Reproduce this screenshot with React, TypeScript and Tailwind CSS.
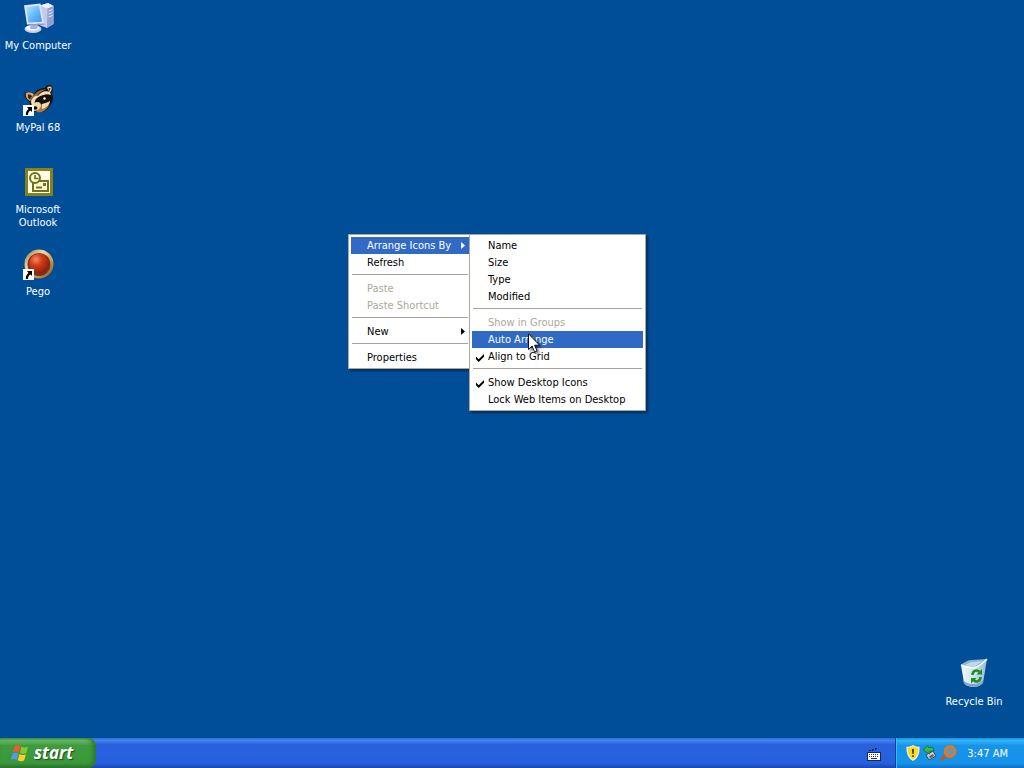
import type { ReactNode } from "react";
import clsx from "clsx";

function MyComputerIcon() {
  return (
    <svg width="32" height="32" viewBox="0 0 32 32" aria-hidden="true">
      <defs>
        <linearGradient id="screen" x1="0" y1="0" x2="1" y2="1">
          <stop offset="0" stopColor="#b5e6ff" />
          <stop offset="0.5" stopColor="#66bdf8" />
          <stop offset="1" stopColor="#3a92ea" />
        </linearGradient>
      </defs>
      <path d="M18 3.5 26 1l5.5 3v18L25 26l-8-3Z" fill="#c3cbea" />
      <path d="M18 3.5 26 1l5.5 3-6 2.5Z" fill="#eef1fc" />
      <path d="M25.5 6.5 31.5 4v18L25 26Z" fill="#94a0cf" />
      <path d="m26.5 9 4-1.5M26.5 12l4-1.5M26.5 15l4-1.5" stroke="#e6eafa" strokeWidth="1" />
      <ellipse cx="11" cy="27" rx="8.5" ry="4" fill="#c9cfeb" />
      <ellipse cx="10.5" cy="26" rx="7" ry="2.8" fill="#f4f5fd" />
      <path d="m9 21 7 2-1 4H8Z" fill="#a7b0d8" />
      <path d="M2 3.2 18.5 1.4 22 21.5 5 22.6Z" fill="#dde4f7" />
      <path d="M4 5 17 3.5l3 16.2-13.5.9Z" fill="url(#screen)" />
      <path d="M22 21.5 5 22.6l1 1 17-.8Z" fill="#8d99c8" />
    </svg>
  );
}

function RaccoonIcon() {
  return (
    <svg width="32" height="32" viewBox="0 0 32 32" aria-hidden="true">
      <path d="M3 9c2-2 7-1 9 1 2-4 6-6 11-6 1-3 5-4 7-2 1 3 1 5 0 8 2 4 1 8-2 12-3 4-7 7-11 6l-8-1c-1-4-1-7-2-10-3-2-6-5-4-8Z" fill="#1f140d" />
      <path d="M4 9c3-1.500 6-.5 8 1.500L8 17c-3-2-5-4-4-8Z" fill="#cdaa72" />
      <path d="M6 10.500c2-.5 4 1 4 2l-2 3c-2-1-2.500-3-2-5Z" fill="#35200f" />
      <path d="M25 4c1-2 4-2 4.500-.5.500 2-.5 4-1.500 5Z" fill="#e9d6ac" />
      <path d="M26.500 4.500c1-1 2-.5 2 .5L27.500 7Z" fill="#35200f" />
      <path d="M12 11c3-4 7-6 12-5.500-5 1.500-8 4.500-9.500 9L10 18l-2-1Z" fill="#8d6336" />
      <path d="M9 18c1-4 4-7 7-6 3-4 7-6 12-4l1 3c-5-2-9 0-11 4-3 1-5 4-8 7Z" fill="#f0dfb7" />
      <path d="M14 15c4-4 9-5 14-3 1 3 0 5-3 6-4 0-7 3-10 4-3-1-3-4-1-7Z" fill="#160f0b" />
      <path d="M17 22c4-3 7-3 11-5 0 5-4 9-8 11-3 1-5 0-6-1Z" fill="#ad783e" />
      <path d="M20 20c3-1 6-1 8-3-1 4-4 7-8 8Z" fill="#f2dfb5" />
      <path d="M12 19c3-2 7-1 7 2s-2 5-6 6c-4-1-5-5-1-8Z" fill="#ead6ad" />
      <circle cx="22.500" cy="14.500" r="1.200" fill="#fff" />
      <ellipse cx="13" cy="24" rx="2.500" ry="1.700" fill="#0d0906" />
    </svg>
  );
}

function OutlookIcon() {
  return (
    <svg width="32" height="32" viewBox="0 0 32 32" aria-hidden="true">
      <path d="M3 2h28v28H3Z" fill="#87811a" />
      <path d="M6 5h22v22H6Z" fill="#fffde6" />
      <path d="M11 15h15v10H11Z" fill="#fffcd0" stroke="#736d25" strokeWidth="2" />
      <circle cx="13" cy="12" r="5" fill="#fffcd0" stroke="#736d25" strokeWidth="2" />
      <path d="M13 9v3.500h3.500" fill="none" stroke="#736d25" strokeWidth="1.600" />
      <path d="M21 17h3v3h-3Z" fill="#736d25" />
      <path d="M14 21.500h6" stroke="#736d25" strokeWidth="2" />
    </svg>
  );
}

function PegoIcon() {
  return (
    <svg width="32" height="32" viewBox="0 0 32 32" aria-hidden="true">
      <defs>
        <linearGradient id="rim" x1="0" y1="0" x2="1" y2="1">
          <stop offset="0" stopColor="#8f6a3c" />
          <stop offset="0.35" stopColor="#f0d9a6" />
          <stop offset="0.6" stopColor="#dba561" />
          <stop offset="1" stopColor="#7c4d20" />
        </linearGradient>
        <radialGradient id="peg" cx="0.35" cy="0.3" r="0.75">
          <stop offset="0" stopColor="#f58a62" />
          <stop offset="0.4" stopColor="#d43d1c" />
          <stop offset="1" stopColor="#8c1a08" />
        </radialGradient>
      </defs>
      <circle cx="17" cy="16" r="14.500" fill="url(#rim)" />
      <circle cx="17" cy="16.500" r="11.500" fill="#7a3516" />
      <circle cx="17" cy="15.500" r="10" fill="url(#peg)" />
    </svg>
  );
}

function RecycleBinIcon() {
  return (
    <svg width="32" height="32" viewBox="0 0 32 32" aria-hidden="true">
      <defs>
        <linearGradient id="bin" x1="0" y1="0" x2="1" y2="0">
          <stop offset="0" stopColor="#f2faff" />
          <stop offset="0.5" stopColor="#cde3ee" />
          <stop offset="1" stopColor="#91bbd3" />
        </linearGradient>
      </defs>
      <path d="M3 7c4 2 8 3 13 3 5-2 9-5 13-9l-4 24c-3 3-7 4-11 4-4-1-7-2-8-4Z" fill="url(#bin)" />
      <path d="M3 7c3-3 7-5 11-5l15-1-13 9C11 10 7 9 3 7Z" fill="#8ab4d0" />
      <path d="M7 7c3-2 6-3 9-3l9-1-9 6c-3 0-6-1-9-2Z" fill="#bedbea" />
      <path d="M3 7c4 2 8 3 13 3 5-2 9-5 13-9" fill="none" stroke="#fff" strokeWidth="1.500" />
      <path d="M5 22c3 3 6 4 10 4s7-1 10-4v3c-3 3-7 4-11 4-4-1-7-2-8-4Z" fill="#7ea7cd" />
      <g fill="none" stroke="#238b24" strokeWidth="2.600">
        <path d="M14.500 17c0-4 4-6 7-3" />
        <path d="M22.500 19c0 4-4 6-7 3" />
      </g>
      <path d="m18.500 16.500 5.500 0v-5.500ZM18.500 20h-5.500v5.500Z" fill="#238b24" />
    </svg>
  );
}

function ShortcutBadge() {
  return (
    <svg className="absolute bottom-0 left-px" width="11" height="11" viewBox="0 0 11 11" aria-hidden="true">
      <path d="M0 0h11v11H0Z" fill="#fff" />
      <path d="M4 2h5v5L7.500 5.500C5.500 6.500 5 8 5 10H3c-.500-2.500.500-4.500 2.500-6Z" fill="#000" />
    </svg>
  );
}

function WindowsFlag() {
  return (
    <svg width="20" height="18" viewBox="0 0 20 18" aria-hidden="true">
      <path d="M4.500 2C7 .500 9 .800 10.500 2L8.800 8.500C7 7.200 5 7.200 2.800 8.300Z" fill="#ee5a2b" />
      <path d="M11.500 2.500c2 1.200 4 1.300 6.500.2l-1.800 6.500c-2.300 1-4.300.8-6.300-.4Z" fill="#86c832" />
      <path d="M2.500 9.500c2.200-1 4.200-1 6 .2L6.800 16C5 14.800 3 14.800.800 15.800Z" fill="#5b94f4" />
      <path d="M9.500 10c2 1.200 4 1.400 6.400.4l-1.800 6.200c-2.400 1-4.400.8-6.300-.4Z" fill="#fccf2e" />
    </svg>
  );
}

function KeyboardIcon() {
  return (
    <svg width="14" height="14" viewBox="0 0 14 14" aria-hidden="true">
      <path d="M2 3.500h4M5 2.500h4M8 1.500h3" fill="none" stroke="#10236b" strokeDasharray="2 1" />
      <path d="M0 5h14v9H0Z" fill="#152868" />
      <path d="M1 6h12v7H1Z" fill="#fff" />
      <path d="M2 7.500h10M2 9.500h10" stroke="#26345f" strokeDasharray="1 1" />
      <path d="M4 11.500h6" stroke="#26345f" />
    </svg>
  );
}

function ShieldIcon() {
  return (
    <svg width="14" height="16" viewBox="0 0 14 16" aria-hidden="true">
      <path d="M7 .8c2 1.300 4 1.700 6 1.700 0 6-1 10-6 12.700C2 12.500 1 8.500 1 2.500c2 0 4-.4 6-1.700Z" fill="#fbda22" stroke="#f6f1c8" strokeWidth="1.300" />
      <path d="M6 4h2l-.4 5H6.400ZM6.200 10.300h1.600v1.600H6.200Z" fill="#3a3208" />
    </svg>
  );
}

function RemoveHardwareIcon() {
  return (
    <svg width="16" height="16" viewBox="0 0 16 16" aria-hidden="true">
      <path d="m4 10 7-4 3 5-7 4Z" fill="#c8ccd2" stroke="#3d4c58" />
      <path d="m7 11.500 4-2.500 1 2-4 2.500Z" fill="#59656f" />
      <path d="m1 5 5-4.500.5 2 4.500 0 1 3-5 1 .5 2.500Z" fill="#3ab84d" stroke="#17722f" strokeWidth="0.800" />
    </svg>
  );
}

function MagnifierIcon() {
  return (
    <svg width="17" height="16" viewBox="0 0 17 16" aria-hidden="true">
      <path d="m6 10-4.500 4.500" stroke="#c65a12" strokeWidth="3" strokeLinecap="round" />
      <circle cx="10" cy="6.500" r="5" fill="#4f9dd0" stroke="#e8761b" strokeWidth="2.800" />
      <circle cx="10" cy="6.500" r="1.300" fill="#d8752a" />
    </svg>
  );
}

function Cursor() {
  return (
    <svg
      className="pointer-events-none absolute top-[333px] left-[528px] z-20 drop-shadow-[2px_2px_1px_rgba(0,0,0,0.5)]"
      width="12"
      height="20"
      viewBox="0 0 12 20"
      aria-hidden="true"
    >
      <path d="M.5.8v15.700l3.600-3.500 2.500 6 2.500-1-2.500-5.800h4.900Z" fill="#fff" stroke="#000" strokeWidth="0.900" />
    </svg>
  );
}

interface DesktopIconProps {
  label: string;
  icon: ReactNode;
  shortcut?: boolean;
}

function DesktopIcon({ label, icon, shortcut }: DesktopIconProps) {
  return (
    <button type="button" className="flex h-[70px] w-19 flex-col items-center gap-[5px] leading-[13px] text-white">
      <span className="relative block">
        {icon}
        {shortcut && <ShortcutBadge />}
      </span>
      <span>{label}</span>
    </button>
  );
}

interface MenuItemProps {
  label: string;
  active?: boolean;
  disabled?: boolean;
  checked?: boolean;
  submenu?: boolean;
}

function MenuItem({ label, active, disabled, checked, submenu }: MenuItemProps) {
  return (
    <button
      type="button"
      role={checked ? "menuitemcheckbox" : "menuitem"}
      aria-checked={checked}
      disabled={disabled}
      className={clsx(
        "flex h-[17px] w-full items-center text-left whitespace-nowrap",
        active && "bg-[#316ac5] text-white",
        disabled && "text-[#aca899]",
        !active && !disabled && "text-black"
      )}
    >
      <span className="flex w-4 shrink-0 items-center pt-0.5 pl-1">
        {checked && (
          <svg width="8" height="8" viewBox="0 0 8 8" aria-hidden="true">
            <path d="M0 2.500 2.700 5.200 8 0v2.700L2.700 8 0 5.200Z" fill="currentColor" />
          </svg>
        )}
      </span>
      <span className="grow">{label}</span>
      {submenu && (
        <svg className="mr-1" width="4" height="7" viewBox="0 0 4 7" aria-hidden="true">
          <path d="M0 0 4 3.500 0 7Z" fill="currentColor" />
        </svg>
      )}
    </button>
  );
}

function Separator() {
  return <hr className="mx-px mt-[3px] mb-[5px] border-[#a5a39c]" />;
}

function ContextMenu() {
  return (
    <div
      role="menu"
      aria-label="Desktop"
      className="absolute top-[234px] left-[348px] w-[124px] border border-[#aca899] bg-white p-0.5 shadow-[2px_2px_2px_rgba(0,0,0,0.4)]"
    >
      <MenuItem label="Arrange Icons By" active submenu />
      <MenuItem label="Refresh" />
      <Separator />
      <MenuItem label="Paste" disabled />
      <MenuItem label="Paste Shortcut" disabled />
      <Separator />
      <MenuItem label="New" submenu />
      <Separator />
      <MenuItem label="Properties" />
    </div>
  );
}

function ArrangeMenu() {
  return (
    <div
      role="menu"
      aria-label="Arrange Icons By"
      className="absolute top-[234px] left-[469px] z-10 w-[177px] border border-[#aca899] bg-white p-0.5 shadow-[2px_2px_2px_rgba(0,0,0,0.4)]"
    >
      <MenuItem label="Name" />
      <MenuItem label="Size" />
      <MenuItem label="Type" />
      <MenuItem label="Modified" />
      <Separator />
      <MenuItem label="Show in Groups" disabled />
      <MenuItem label="Auto Arrange" active />
      <MenuItem label="Align to Grid" checked />
      <Separator />
      <MenuItem label="Show Desktop Icons" checked />
      <MenuItem label="Lock Web Items on Desktop" />
    </div>
  );
}

function Taskbar() {
  return (
    <footer className="flex h-[30px] items-stretch bg-[linear-gradient(#2f68d8_0%,#3f86f0_8%,#2a60dc_22%,#2660e0_85%,#1c45a8_100%)] text-white">
      <button
        type="button"
        className="flex w-24 items-center gap-1 rounded-r-lg bg-[linear-gradient(#4a9a4a_0%,#6bbb6b_8%,#3e9c3e_25%,#3a963a_85%,#2a702a_100%)] pl-2.5 shadow-[inset_-3px_0_4px_#2a782c]"
      >
        <WindowsFlag />
        <span className="font-['Open_Sans',sans-serif] text-[17px] leading-5 font-bold italic [text-shadow:1px_1px_1px_#1c4a1c]">
          start
        </span>
      </button>
      <div className="flex grow items-center justify-end pt-0.5 pr-3.5">
        <button type="button" aria-label="Keyboard">
          <KeyboardIcon />
        </button>
      </div>
      <div className="flex w-[129px] items-center gap-0.5 border-l border-[#0b3f9c] bg-[linear-gradient(#1688dc_0%,#2fb8f8_8%,#1793ec_25%,#1592ea_85%,#1070c0_100%)] pl-2.5 shadow-[inset_1px_0_0_#3cbcf8]">
        <ShieldIcon />
        <RemoveHardwareIcon />
        <MagnifierIcon />
        <time className="grow pr-4 text-right">3:47 AM</time>
      </div>
    </footer>
  );
}

export default function App() {
  return (
    <div className="flex min-h-screen flex-col bg-[#004e98] font-['DejaVu_Sans_Condensed','DejaVu_Sans',sans-serif] text-[11px] leading-[13px] select-none">
      <main className="relative flex grow justify-between">
        <div className="flex flex-col gap-3 pt-0.5">
          <DesktopIcon label="My Computer" icon={<MyComputerIcon />} />
          <DesktopIcon label="MyPal 68" icon={<RaccoonIcon />} shortcut />
          <DesktopIcon label="Microsoft Outlook" icon={<OutlookIcon />} />
          <DesktopIcon label="Pego" icon={<PegoIcon />} shortcut />
        </div>
        <div className="flex flex-col justify-end pr-3 pb-2.5">
          <DesktopIcon label="Recycle Bin" icon={<RecycleBinIcon />} />
        </div>
        <ContextMenu />
        <ArrangeMenu />
        <Cursor />
      </main>
      <Taskbar />
    </div>
  );
}
